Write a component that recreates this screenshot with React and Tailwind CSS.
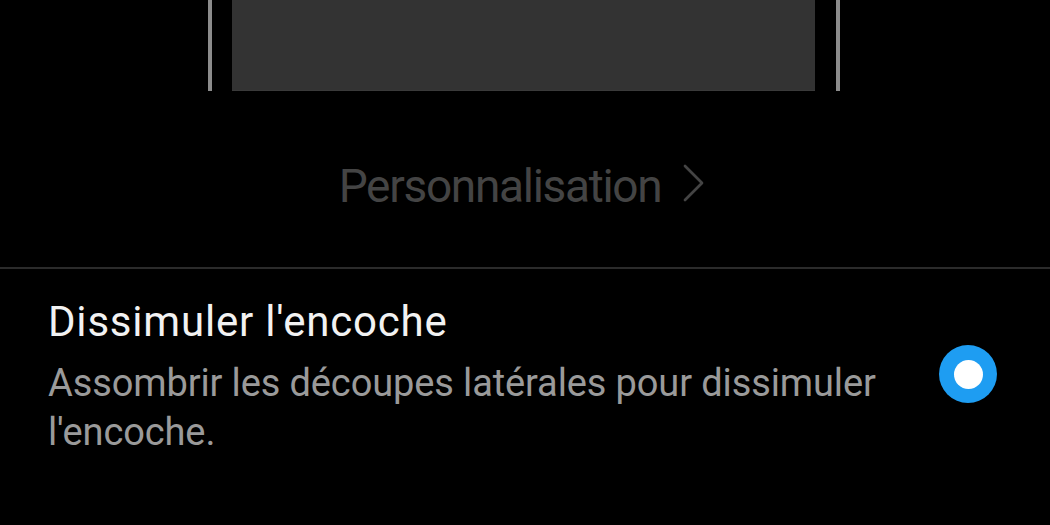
const App = () => {
  return (
    <div className="w-[1050px] h-[525px] bg-black overflow-hidden flex flex-col font-['Roboto',sans-serif]">
      {/* Preview of the screen with side frame lines */}
      <div className="flex items-stretch h-[91px] pl-[208px]">
        <div className="w-[4px] bg-[#8c8c8c]" />
        <div className="w-[583px] ml-[20px] bg-[#333333] border-b border-[#3a3a3a]" />
        <div className="w-[4px] ml-[21px] bg-[#8c8c8c]" />
      </div>

      {/* Personnalisation link */}
      <div className="flex justify-center items-center mt-[70px] h-[50px] text-[#444444] pr-[6px]">
        <span className="text-[46px] leading-[50px] tracking-[-1.3px]">Personnalisation</span>
        <svg width="22" height="38" viewBox="0 0 22 38" fill="none" className="ml-[22px] -mt-[6px]">
          <polyline points="2,2 19,19 2,36" stroke="currentColor" strokeWidth="2.7" strokeLinecap="round" strokeLinejoin="round" />
        </svg>
      </div>

      {/* Divider */}
      <div className="mt-[56px] h-[2px] bg-[#2b2b2b]" />

      {/* Setting row */}
      <div className="flex items-start pl-[48px] pr-[53px] pt-[29px]">
        <div className="flex-1">
          <div className="text-[42px] text-[#f2f2f2] leading-[48px] tracking-[0.8px]">Dissimuler l'encoche</div>
          <div className="text-[38px] text-[#9a9a9a] leading-[49px] mt-[13px] tracking-[-0.12px]">
            Assombrir les découpes latérales pour dissimuler
            <br />
            l'encoche.
          </div>
        </div>
        <div className="mt-[47px] w-[58px] h-[58px] rounded-full bg-[#1e9df2] flex items-center justify-center">
          <div className="w-[29px] h-[29px] rounded-full bg-white" />
        </div>
      </div>
    </div>
  );
};

export default App;
